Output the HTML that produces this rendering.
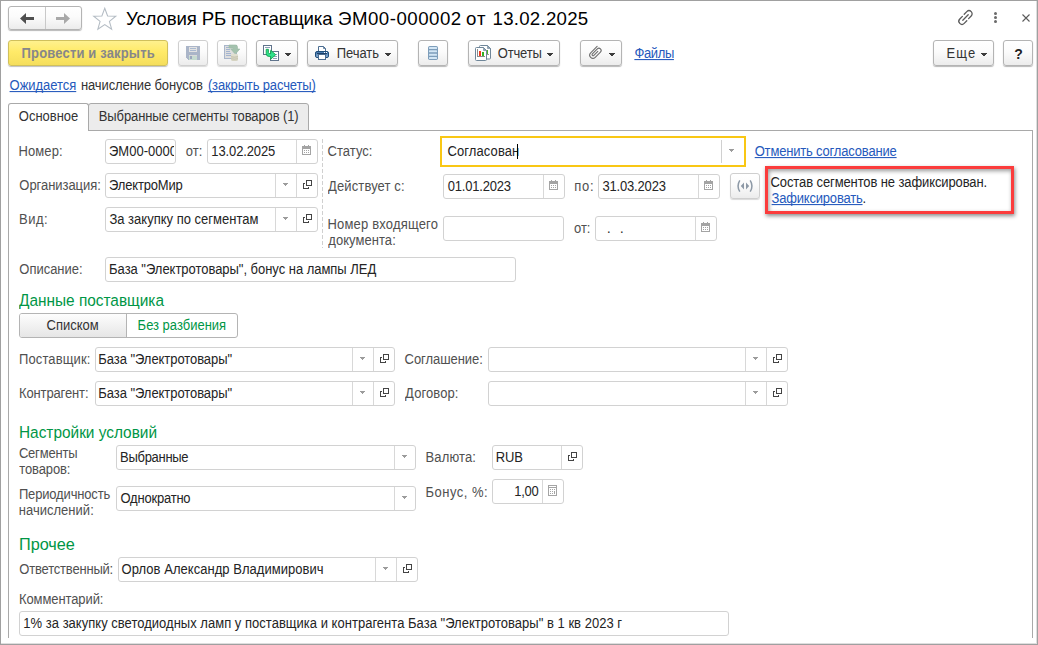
<!DOCTYPE html>
<html><head><meta charset="utf-8"><title>Условия РБ поставщика</title>
<style>
html,body{margin:0;padding:0;background:#fff;}
body{width:1038px;height:645px;position:relative;overflow:hidden;font-family:"Liberation Sans",Arial,sans-serif;font-size:13px;color:#333;}
.a{position:absolute;white-space:nowrap;}
.t{position:absolute;white-space:nowrap;line-height:16px;height:16px;transform:scaleY(1.07);transform-origin:0 12.5px;}
.btn{border:1px solid #b4b4b4;border-radius:3px;background:linear-gradient(#ffffff,#fbfbfb 45%,#ececec);box-shadow:0 1px 1px rgba(0,0,0,.28);box-sizing:border-box;}
.btn.dis{border-color:#cfcfcf;box-shadow:0 1px 1px rgba(0,0,0,.15);}
.lnk{color:#2559bc;text-decoration:underline;text-decoration-skip-ink:none;text-underline-offset:1px;text-decoration-thickness:1px;}
.fld{position:absolute;border:1px solid #d2d2d2;border-radius:3px;background:#fff;box-sizing:border-box;height:25px;}
.dv{position:absolute;top:0;width:1px;height:23px;background:#d8d8d8;}
.lbl{color:#505050;}
.val{color:#242424;}
.hdr{color:#009646;font-size:15.4px;line-height:20px;height:20px;}
svg{position:absolute;overflow:visible;}
</style></head><body>
<div class="a" style="left:0;top:0;width:1036px;height:643px;border:1px solid #a0a0a0;box-shadow:inset -1px -1px 0 #dedede;"></div>
<div class="a btn" style="left:8px;top:6px;width:74px;height:24px;"></div>
<div class="a" style="left:45px;top:7px;width:1px;height:22px;background:#c9c9c9;"></div>
<svg style="left:20px;top:13px" width="14" height="11"><path d="M0 5.5L6 0v4h8v3H6v4z" fill="#4f4f4f"/></svg>
<svg style="left:56px;top:13px" width="14" height="11"><path d="M14 5.5L8 0v4H0v3h8v4z" fill="#a9a9a9"/></svg>
<svg style="left:91.500px;top:6.500px" width="25.500" height="23.400" viewBox="0 0 24 22"><path d="M12 1.2l2.7 7.2 7.7.3-6 4.8 2.1 7.4L12 16.6 5.5 20.9l2.1-7.4-6-4.8 7.700-.3z" fill="#fff" stroke="#b4bcc4" stroke-width="1"/></svg>
<div class="a" style="left:126px;top:7px;font-size:18.67px;color:#000;line-height:24px;letter-spacing:-0.17px;">Условия РБ поставщика</div>
<div class="a" style="left:338px;top:7px;font-size:18.67px;color:#000;line-height:24px;letter-spacing:0.5px;">ЭМ00-000002</div>
<div class="a" style="left:466px;top:7px;font-size:18.67px;color:#000;line-height:24px;letter-spacing:1.0px;">от</div>
<div class="a" style="left:492.5px;top:7px;font-size:18.67px;color:#000;line-height:24px;letter-spacing:0.26px;">13.02.2025</div>
<svg style="left:957px;top:9px" width="17" height="17" viewBox="0 0 17 17"><g fill="none" stroke="#5a5a5a" stroke-width="1.3" stroke-linecap="round"><path d="M7.2 5.2l2.6-2.6a3.1 3.1 0 0 1 4.400 4.400l-2.6 2.600"/><path d="M9.800 11.800l-2.600 2.600a3.100 3.100 0 0 1-4.400-4.400l2.600-2.600"/><path d="M5.800 11.200l5.400-5.400"/></g></svg>
<div class="a" style="left:994px;top:12px;width:3px;height:3px;border-radius:50%;background:#6a6a6a;"></div>
<div class="a" style="left:994px;top:16px;width:3px;height:3px;border-radius:50%;background:#6a6a6a;"></div>
<div class="a" style="left:994px;top:20px;width:3px;height:3px;border-radius:50%;background:#6a6a6a;"></div>
<svg style="left:1022px;top:14px" width="8" height="8"><path d="M0.500 0.500l7 7M7.500 0.500l-7 7" stroke="#5a5a5a" stroke-width="1.1" fill="none"/></svg>
<div class="a" style="left:8px;top:40px;width:160px;height:26px;box-sizing:border-box;border:1px solid #d0c05c;border-radius:3px;background:linear-gradient(#fff18e,#ffea68 45%,#f5de5c);box-shadow:0 1px 1px rgba(0,0,0,.25);"></div>
<div class="t val" style="left:21.60px;top:46.4px;font-weight:bold;color:#87878a;letter-spacing:0.16px;">Провести и закрыть</div>
<div class="a btn dis" style="left:178px;top:40px;width:30px;height:26px;"></div>
<div class="a btn dis" style="left:217px;top:40px;width:30px;height:26px;"></div>
<div class="a btn" style="left:256px;top:40px;width:42px;height:26px;"></div>
<div class="a btn" style="left:307px;top:40px;width:91px;height:26px;"></div>
<div class="a btn" style="left:418px;top:40px;width:30px;height:26px;"></div>
<div class="a btn" style="left:468px;top:40px;width:92px;height:26px;"></div>
<div class="a btn" style="left:580px;top:40px;width:42px;height:26px;"></div>
<div class="a btn" style="left:933px;top:40px;width:61px;height:26px;"></div>
<div class="a btn" style="left:1003px;top:40px;width:30px;height:26px;"></div>
<svg style="left:186px;top:46px" width="14" height="14" shape-rendering="crispEdges"><path d="M0 0h14v14H2L0 12z" fill="#aab5c8"/><rect x="3" y="1" width="8" height="5" fill="#e2e2e2"/><rect x="4" y="2" width="6" height="1" fill="#a9b9d0"/><rect x="4" y="4" width="6" height="1" fill="#a9b9d0"/><rect x="3" y="9" width="8" height="5" fill="#c6dbd0"/><rect x="3" y="9" width="8" height="1" fill="#dadada"/><rect x="4" y="10" width="2" height="3" fill="#9aa6bd"/></svg>
<svg style="left:224px;top:45px" width="16" height="17"><g shape-rendering="crispEdges"><rect x="0.5" y="0.5" width="12" height="13" fill="#dedede" stroke="#a9b6cb"/><g fill="#a3b4d0"><rect x="2" y="2" width="3" height="1"/><rect x="2" y="4" width="4" height="1"/><rect x="2" y="6" width="4" height="1"/><rect x="2" y="8" width="5" height="1"/><rect x="2" y="10" width="5" height="1"/></g></g><path d="M5 0h6.500q2 0 2 2v2h2.300l-4.500 5.200L6.800 4h2.400V3H5z" fill="#a4c2ae" stroke="#98b8a3" stroke-width="0.600"/><g><rect x="7" y="9.500" width="7" height="6.500" rx="2" ry="1.500" fill="#d6d4c2"/><path d="M7 11.500q3.500 1.500 7 0M7 13.500q3.500 1.500 7 0" stroke="#c4c2ae" stroke-width="0.800" fill="none"/><ellipse cx="10.500" cy="10" rx="3.500" ry="1.200" fill="#e0dfd0"/></g></svg>
<svg style="left:263px;top:45px" width="16" height="16"><g shape-rendering="crispEdges"><rect x="0.5" y="0.5" width="8" height="9" fill="#fff" stroke="#60748c"/><rect x="2" y="2" width="5" height="1" fill="#8fa0b8"/><rect x="7.500" y="6.500" width="8" height="9" fill="#fff" stroke="#60748c"/><g fill="#8fa0b8"><rect x="11" y="9" width="3" height="1"/><rect x="11" y="11" width="3" height="1"/><rect x="10" y="13" width="4" height="1"/></g></g><path d="M3.200 4.300h2.200v3.200q0 1 1 1h1.300V5.300l5 4.400-5 4.600v-2.800H6.200q-3 0-3-3z" fill="#2ee08c" stroke="#12a64c" stroke-width="0.900" stroke-linejoin="round"/></svg>
<svg style="left:315px;top:46px" width="14" height="14"><path d="M3.500 5.500v-5h5l2 2v3z" fill="#fff" stroke="#4a6c90" stroke-width="1"/><path d="M8.500 0.500v2h2" fill="none" stroke="#4a6c90" stroke-width="0.800"/><defs><linearGradient id="pg" x1="0" y1="0" x2="0" y2="1"><stop offset="0" stop-color="#3a6ea5"/><stop offset="1" stop-color="#93b4d8"/></linearGradient></defs><rect x="0.500" y="5.500" width="13" height="6" rx="1.500" fill="url(#pg)" stroke="#1f4e7a"/><rect x="2" y="7" width="10" height="1" fill="#1c4068"/><rect x="9" y="6" width="1" height="1" fill="#fff"/><rect x="11" y="6" width="1" height="1" fill="#fff"/><rect x="3.500" y="8.500" width="7" height="5" fill="#fff" stroke="#4a6c90"/></svg>
<svg style="left:428px;top:46px" width="10" height="14"><rect x="0" y="0" width="10" height="14" rx="1.800" fill="#7d9dba"/><g fill="#d3e6f5"><rect x="1" y="1" width="8" height="2" rx="0.500"/><rect x="1" y="4.300" width="8" height="2" rx="0.500"/><rect x="1" y="7.700" width="8" height="2" rx="0.500"/><rect x="1" y="11" width="8" height="2" rx="0.500"/></g></svg>
<svg style="left:475px;top:45px" width="17" height="16"><path d="M5.500 0.500h7l3 3v9.500q0 1-1 1H5.500q-1 0-1-1V1.500q0-1 1-1z" fill="#fff" stroke="#6f8699"/><path d="M12.500 0.500v3h3z" fill="#8fa3b5" stroke="#6f8699" stroke-width="0.600"/><rect x="11" y="5" width="2" height="4" fill="#4db52e" shape-rendering="crispEdges"/><rect x="10" y="9" width="4" height="1" fill="#9a9a9a" shape-rendering="crispEdges"/><path d="M1.500 2.500h7l3 3v9q0 1-1 1H1.500q-1 0-1-1V3.500q0-1 1-1z" fill="#fff" stroke="#6f8699"/><path d="M8.500 2.500v3h3z" fill="#8fa3b5" stroke="#6f8699" stroke-width="0.600"/><g shape-rendering="crispEdges"><rect x="2" y="4" width="1" height="8" fill="#8a8a8a"/><rect x="2" y="11" width="8" height="1" fill="#8a8a8a"/><rect x="4" y="6" width="2" height="5" fill="#f03a1e"/><rect x="7" y="7" width="2" height="4" fill="#35b021"/></g></svg>
<svg style="left:585.8px;top:44.2px" width="18" height="18" viewBox="-9 -9 18 18"><g transform="rotate(45)"><path d="M-3.200 -6.200v9.100a3.200 3.200 0 0 0 6.400 0v-7.400a2.200 2.200 0 0 0 -4.400 0v7a1.050 1.050 0 0 0 2.100 0v-5.600" fill="none" stroke="#6e6e6e" stroke-width="1.100" stroke-linecap="round"/></g></svg>
<svg style="left:285px;top:53px" width="6" height="3" shape-rendering="crispEdges"><path d="M0 0h6v1h-1v1h-1v1h-2v-1h-1v-1h-1z" fill="#3c3c3c"/></svg>
<svg style="left:385px;top:53px" width="6" height="3" shape-rendering="crispEdges"><path d="M0 0h6v1h-1v1h-1v1h-2v-1h-1v-1h-1z" fill="#3c3c3c"/></svg>
<svg style="left:547px;top:53px" width="6" height="3" shape-rendering="crispEdges"><path d="M0 0h6v1h-1v1h-1v1h-2v-1h-1v-1h-1z" fill="#3c3c3c"/></svg>
<svg style="left:609px;top:53px" width="6" height="3" shape-rendering="crispEdges"><path d="M0 0h6v1h-1v1h-1v1h-2v-1h-1v-1h-1z" fill="#3c3c3c"/></svg>
<svg style="left:981px;top:53px" width="6" height="3" shape-rendering="crispEdges"><path d="M0 0h6v1h-1v1h-1v1h-2v-1h-1v-1h-1z" fill="#3c3c3c"/></svg>
<div class="t val" style="left:336.64px;top:46.4px;letter-spacing:-0.036px;color:#333;">Печать</div>
<div class="t val" style="left:497.76px;top:46.4px;letter-spacing:-0.185px;color:#333;">Отчеты</div>
<div class="t val" style="left:946.58px;top:46.4px;letter-spacing:1.113px;color:#333;">Еще</div>
<div class="t" style="left:1003.5px;top:46px;width:30px;text-align:center;font-weight:bold;font-size:14px;color:#222;">?</div>
<div class="t lnk" style="left:634.39px;top:46.4px;letter-spacing:-0.354px;">Файлы</div>
<div class="t lnk" style="left:9.57px;top:78.4px;letter-spacing:-0.041px;">Ожидается</div>
<div class="t val" style="left:80.94px;top:78.4px;letter-spacing:-0.108px;color:#333;">начисление бонусов</div>
<div class="t lnk" style="left:207.90px;top:78.4px;letter-spacing:-0.140px;">(закрыть расчеты)</div>
<div class="a" style="left:8px;top:130px;width:1025px;height:508px;border:1px solid #a9a9a9;border-bottom:none;box-sizing:border-box;"></div>
<div class="a" style="left:88px;top:103px;width:221px;height:28px;box-sizing:border-box;border:1px solid #a9a9a9;border-radius:3px 3px 0 0;background:#ececec;"></div>
<div class="a" style="left:8px;top:103px;width:81px;height:28px;box-sizing:border-box;border:1px solid #a9a9a9;border-bottom:none;border-radius:3px 3px 0 0;background:#fff;"></div>
<div class="t val" style="left:18.85px;top:109.0px;letter-spacing:-0.025px;color:#333;">Основное</div>
<div class="t val" style="left:98.80px;top:109.0px;letter-spacing:-0.110px;color:#333;">Выбранные сегменты товаров (1)</div>
<div class="t lbl" style="left:18.61px;top:144.1px;letter-spacing:0.058px;">Номер:</div>
<div class="fld" style="left:105px;top:139px;width:71px;"></div>
<div class="a" style="left:106px;top:140px;width:68px;height:23px;overflow:hidden;">
<div class="t val" style="left:3.00px;top:4.4px;">ЭМ00-000002</div>
</div>
<div class="t lbl" style="left:185.69px;top:144.1px;letter-spacing:0.065px;">от:</div>
<div class="fld" style="left:207px;top:139px;width:111px;"></div>
<div class="a" style="left:296px;top:140px;width:1px;height:23px;background:#d8d8d8;"></div>
<svg style="left:302px;top:145px" width="9" height="11" shape-rendering="crispEdges"><rect x="2" y="0" width="1" height="1" fill="#a4a4a4"/><rect x="6" y="0" width="1" height="1" fill="#a4a4a4"/><rect x="0" y="1" width="9" height="3" fill="#a4a4a4"/><rect x="0.5" y="1.5" width="8" height="8" fill="none" stroke="#a4a4a4"/><g fill="#a4a4a4"><rect x="2" y="5" width="1" height="1"/><rect x="4" y="5" width="1" height="1"/><rect x="6" y="5" width="1" height="1"/><rect x="2" y="7" width="1" height="1"/><rect x="4" y="7" width="1" height="1"/><rect x="6" y="7" width="1" height="1"/></g></svg>
<div class="t val" style="left:211.32px;top:144.4px;letter-spacing:-0.118px;">13.02.2025</div>
<div class="t lbl" style="left:19.36px;top:178.1px;letter-spacing:-0.053px;">Организация:</div>
<div class="fld" style="left:105px;top:173px;width:213px;"></div>
<div class="a" style="left:275px;top:174px;width:1px;height:23px;background:#d8d8d8;"></div>
<svg style="left:283px;top:183px" width="5" height="3" shape-rendering="crispEdges"><path d="M0 0h5v1h-1v1h-1v1h-1v-1h-1v-1h-1z" fill="#9c9c9c"/></svg>
<div class="a" style="left:296px;top:174px;width:1px;height:23px;background:#d8d8d8;"></div>
<svg style="left:303px;top:180px" width="9" height="9" shape-rendering="crispEdges"><rect x="3.5" y="0.5" width="5" height="5" fill="none" stroke="#444"/><path d="M2 3.5H0.5V8.500H5.500V7" fill="none" stroke="#444"/></svg>
<div class="t val" style="left:109.09px;top:178.4px;letter-spacing:-0.188px;">ЭлектроМир</div>
<div class="t lbl" style="left:18.98px;top:212.1px;letter-spacing:0.497px;">Вид:</div>
<div class="fld" style="left:105px;top:207px;width:213px;"></div>
<div class="a" style="left:275px;top:208px;width:1px;height:23px;background:#d8d8d8;"></div>
<svg style="left:283px;top:217px" width="5" height="3" shape-rendering="crispEdges"><path d="M0 0h5v1h-1v1h-1v1h-1v-1h-1v-1h-1z" fill="#9c9c9c"/></svg>
<div class="a" style="left:296px;top:208px;width:1px;height:23px;background:#d8d8d8;"></div>
<svg style="left:303px;top:214px" width="9" height="9" shape-rendering="crispEdges"><rect x="3.5" y="0.5" width="5" height="5" fill="none" stroke="#444"/><path d="M2 3.5H0.5V8.500H5.500V7" fill="none" stroke="#444"/></svg>
<div class="t val" style="left:109.39px;top:212.4px;letter-spacing:0.011px;">За закупку по сегментам</div>
<div class="a" style="left:322px;top:139px;width:1px;height:109px;background:repeating-linear-gradient(#d0d0d0 0,#d0d0d0 4px,transparent 4px,transparent 6px);"></div>
<div class="t lbl" style="left:327.61px;top:144.1px;letter-spacing:0.024px;">Статус:</div>
<div class="a" style="left:440px;top:136px;width:306px;height:31px;box-sizing:border-box;border:2px solid #f9c714;background:#fff;"></div>
<div class="a" style="left:721px;top:140px;width:1px;height:23px;background:#d0d0d0;"></div>
<svg style="left:729px;top:149px" width="5" height="3" shape-rendering="crispEdges"><path d="M0 0h5v1h-1v1h-1v1h-1v-1h-1v-1h-1z" fill="#9c9c9c"/></svg>
<div class="t val" style="left:447.48px;top:144.1px;letter-spacing:0.1px;">Согласован</div>
<div class="a" style="left:517px;top:144px;width:1px;height:15px;background:#000;"></div>
<div class="t lnk" style="left:754.69px;top:144.1px;letter-spacing:-0.180px;">Отменить согласование</div>
<div class="t lbl" style="left:328.11px;top:179.1px;letter-spacing:0.109px;">Действует с:</div>
<div class="fld" style="left:443px;top:174px;width:122px;"></div>
<div class="a" style="left:543px;top:175px;width:1px;height:23px;background:#d8d8d8;"></div>
<svg style="left:549px;top:180px" width="9" height="11" shape-rendering="crispEdges"><rect x="2" y="0" width="1" height="1" fill="#a4a4a4"/><rect x="6" y="0" width="1" height="1" fill="#a4a4a4"/><rect x="0" y="1" width="9" height="3" fill="#a4a4a4"/><rect x="0.5" y="1.5" width="8" height="8" fill="none" stroke="#a4a4a4"/><g fill="#a4a4a4"><rect x="2" y="5" width="1" height="1"/><rect x="4" y="5" width="1" height="1"/><rect x="6" y="5" width="1" height="1"/><rect x="2" y="7" width="1" height="1"/><rect x="4" y="7" width="1" height="1"/><rect x="6" y="7" width="1" height="1"/></g></svg>
<div class="t val" style="left:447.72px;top:179.4px;letter-spacing:-0.206px;">01.01.2023</div>
<div class="t lbl" style="left:574.33px;top:179.1px;letter-spacing:0.647px;">по:</div>
<div class="fld" style="left:598px;top:174px;width:122px;"></div>
<div class="a" style="left:698px;top:175px;width:1px;height:23px;background:#d8d8d8;"></div>
<svg style="left:704px;top:180px" width="9" height="11" shape-rendering="crispEdges"><rect x="2" y="0" width="1" height="1" fill="#a4a4a4"/><rect x="6" y="0" width="1" height="1" fill="#a4a4a4"/><rect x="0" y="1" width="9" height="3" fill="#a4a4a4"/><rect x="0.5" y="1.5" width="8" height="8" fill="none" stroke="#a4a4a4"/><g fill="#a4a4a4"><rect x="2" y="5" width="1" height="1"/><rect x="4" y="5" width="1" height="1"/><rect x="6" y="5" width="1" height="1"/><rect x="2" y="7" width="1" height="1"/><rect x="4" y="7" width="1" height="1"/><rect x="6" y="7" width="1" height="1"/></g></svg>
<div class="t val" style="left:602.50px;top:179.4px;letter-spacing:-0.182px;">31.03.2023</div>
<div class="a btn dis" style="left:730px;top:173px;width:30px;height:26px;"></div>
<svg style="left:736px;top:180px" width="18" height="12" viewBox="0 0 18 12"><g fill="none" stroke="#8d99a6" stroke-width="1.500"><path d="M3.800 0.300Q0.300 6 3.800 11.700"/><path d="M14.200 0.300Q17.700 6 14.200 11.700"/></g><path d="M8 2.600v6.800L4.800 6zM10 2.600v6.800L13.200 6z" fill="#8d99a6"/></svg>
<div class="t lbl" style="left:327.53px;top:217.1px;letter-spacing:0.180px;">Номер входящего</div>
<div class="t lbl" style="left:328.35px;top:233.4px;letter-spacing:0.044px;">документа:</div>
<div class="fld" style="left:443px;top:216px;width:121px;"></div>
<div class="t lbl" style="left:574.01px;top:221.1px;letter-spacing:-0.019px;">от:</div>
<div class="fld" style="left:595px;top:216px;width:122px;"></div>
<div class="a" style="left:695px;top:217px;width:1px;height:23px;background:#d8d8d8;"></div>
<svg style="left:701px;top:222px" width="9" height="11" shape-rendering="crispEdges"><rect x="2" y="0" width="1" height="1" fill="#a4a4a4"/><rect x="6" y="0" width="1" height="1" fill="#a4a4a4"/><rect x="0" y="1" width="9" height="3" fill="#a4a4a4"/><rect x="0.5" y="1.5" width="8" height="8" fill="none" stroke="#a4a4a4"/><g fill="#a4a4a4"><rect x="2" y="5" width="1" height="1"/><rect x="4" y="5" width="1" height="1"/><rect x="6" y="5" width="1" height="1"/><rect x="2" y="7" width="1" height="1"/><rect x="4" y="7" width="1" height="1"/><rect x="6" y="7" width="1" height="1"/></g></svg>
<div class="t val" style="left:607.00px;top:221.1px;">.</div>
<div class="t val" style="left:620.00px;top:221.1px;">.</div>
<div class="a" style="left:765px;top:166px;width:249px;height:48px;box-sizing:border-box;border:3px solid #fb3c3c;background:#fff;box-shadow:1px 2px 4px rgba(0,0,0,.45),inset 1px 2px 4px rgba(0,0,0,.4);"></div>
<div class="t val" style="left:770.58px;top:175.4px;letter-spacing:-0.108px;">Состав сегментов не зафиксирован.</div>
<div class="t val" style="left:771.62px;top:191.4px;letter-spacing:-0.200px;"><span class="lnk">Зафиксировать</span>.</div>
<div class="t lbl" style="left:19.36px;top:262.4px;letter-spacing:-0.033px;">Описание:</div>
<div class="fld" style="left:105px;top:257px;width:411px;"></div>
<div class="t val" style="left:109.09px;top:262.4px;letter-spacing:-0.029px;">База "Электротовары", бонус на лампы ЛЕД</div>
<div class="t hdr" style="left:19px;top:290.9px;transform:scale(1.0,1.06);transform-origin:0 15.5px;">Данные поставщика</div>
<div class="a" style="left:19px;top:313px;width:219px;height:25px;box-sizing:border-box;border:1px solid #b4b4b4;border-radius:3px;background:#fff;"></div>
<div class="a" style="left:20px;top:314px;width:106px;height:23px;background:linear-gradient(#fdfdfd,#e6e6e6);border-right:1px solid #b4b4b4;border-radius:2px 0 0 2px;"></div>
<div class="t val" style="left:46.53px;top:317.9px;letter-spacing:0.002px;color:#333;">Списком</div>
<div class="t val" style="left:137.61px;top:317.9px;letter-spacing:-0.009px;color:#009646;">Без разбиения</div>
<div class="t lbl" style="left:18.94px;top:352.1px;letter-spacing:0.126px;">Поставщик:</div>
<div class="fld" style="left:95px;top:347px;width:300px;"></div>
<div class="a" style="left:352px;top:348px;width:1px;height:23px;background:#d8d8d8;"></div>
<svg style="left:360px;top:357px" width="5" height="3" shape-rendering="crispEdges"><path d="M0 0h5v1h-1v1h-1v1h-1v-1h-1v-1h-1z" fill="#9c9c9c"/></svg>
<div class="a" style="left:373px;top:348px;width:1px;height:23px;background:#d8d8d8;"></div>
<svg style="left:380px;top:354px" width="9" height="9" shape-rendering="crispEdges"><rect x="3.5" y="0.5" width="5" height="5" fill="none" stroke="#444"/><path d="M2 3.5H0.5V8.500H5.500V7" fill="none" stroke="#444"/></svg>
<div class="t val" style="left:98.35px;top:352.4px;letter-spacing:-0.062px;">База "Электротовары"</div>
<div class="t lbl" style="left:404.61px;top:352.1px;letter-spacing:-0.070px;">Соглашение:</div>
<div class="fld" style="left:488px;top:347px;width:300px;"></div>
<div class="a" style="left:745px;top:348px;width:1px;height:23px;background:#d8d8d8;"></div>
<svg style="left:753px;top:357px" width="5" height="3" shape-rendering="crispEdges"><path d="M0 0h5v1h-1v1h-1v1h-1v-1h-1v-1h-1z" fill="#9c9c9c"/></svg>
<div class="a" style="left:766px;top:348px;width:1px;height:23px;background:#d8d8d8;"></div>
<svg style="left:773px;top:354px" width="9" height="9" shape-rendering="crispEdges"><rect x="3.5" y="0.5" width="5" height="5" fill="none" stroke="#444"/><path d="M2 3.5H0.5V8.500H5.500V7" fill="none" stroke="#444"/></svg>
<div class="t lbl" style="left:18.98px;top:386.1px;letter-spacing:-0.129px;">Контрагент:</div>
<div class="fld" style="left:95px;top:381px;width:300px;"></div>
<div class="a" style="left:352px;top:382px;width:1px;height:23px;background:#d8d8d8;"></div>
<svg style="left:360px;top:391px" width="5" height="3" shape-rendering="crispEdges"><path d="M0 0h5v1h-1v1h-1v1h-1v-1h-1v-1h-1z" fill="#9c9c9c"/></svg>
<div class="a" style="left:373px;top:382px;width:1px;height:23px;background:#d8d8d8;"></div>
<svg style="left:380px;top:388px" width="9" height="9" shape-rendering="crispEdges"><rect x="3.5" y="0.5" width="5" height="5" fill="none" stroke="#444"/><path d="M2 3.5H0.5V8.500H5.500V7" fill="none" stroke="#444"/></svg>
<div class="t val" style="left:98.35px;top:386.4px;letter-spacing:-0.062px;">База "Электротовары"</div>
<div class="t lbl" style="left:405.11px;top:386.1px;letter-spacing:0.092px;">Договор:</div>
<div class="fld" style="left:488px;top:381px;width:300px;"></div>
<div class="a" style="left:745px;top:382px;width:1px;height:23px;background:#d8d8d8;"></div>
<svg style="left:753px;top:391px" width="5" height="3" shape-rendering="crispEdges"><path d="M0 0h5v1h-1v1h-1v1h-1v-1h-1v-1h-1z" fill="#9c9c9c"/></svg>
<div class="a" style="left:766px;top:382px;width:1px;height:23px;background:#d8d8d8;"></div>
<svg style="left:773px;top:388px" width="9" height="9" shape-rendering="crispEdges"><rect x="3.5" y="0.5" width="5" height="5" fill="none" stroke="#444"/><path d="M2 3.5H0.5V8.500H5.500V7" fill="none" stroke="#444"/></svg>
<div class="t hdr" style="left:19px;top:422.9px;transform:scale(1.0,1.06);transform-origin:0 15.5px;">Настройки условий</div>
<div class="t lbl" style="left:18.92px;top:445.9px;letter-spacing:-0.203px;">Сегменты</div>
<div class="t lbl" style="left:19.35px;top:462.1px;letter-spacing:-0.145px;">товаров:</div>
<div class="fld" style="left:116px;top:445px;width:300px;"></div>
<div class="a" style="left:394px;top:446px;width:1px;height:23px;background:#d8d8d8;"></div>
<svg style="left:402px;top:455px" width="5" height="3" shape-rendering="crispEdges"><path d="M0 0h5v1h-1v1h-1v1h-1v-1h-1v-1h-1z" fill="#9c9c9c"/></svg>
<div class="t val" style="left:120.09px;top:450.4px;letter-spacing:-0.292px;">Выбранные</div>
<div class="t lbl" style="left:425.53px;top:450.1px;letter-spacing:0.133px;">Валюта:</div>
<div class="fld" style="left:492px;top:445px;width:91px;"></div>
<div class="a" style="left:561px;top:446px;width:1px;height:23px;background:#d8d8d8;"></div>
<svg style="left:568px;top:452px" width="9" height="9" shape-rendering="crispEdges"><rect x="3.5" y="0.5" width="5" height="5" fill="none" stroke="#444"/><path d="M2 3.5H0.5V8.500H5.500V7" fill="none" stroke="#444"/></svg>
<div class="t val" style="left:495.65px;top:450.4px;letter-spacing:-0.046px;">RUB</div>
<div class="t lbl" style="left:18.94px;top:486.6px;letter-spacing:-0.167px;">Периодичность</div>
<div class="t lbl" style="left:18.72px;top:502.9px;letter-spacing:0.024px;">начислений:</div>
<div class="fld" style="left:116px;top:486px;width:300px;"></div>
<div class="a" style="left:394px;top:487px;width:1px;height:23px;background:#d8d8d8;"></div>
<svg style="left:402px;top:496px" width="5" height="3" shape-rendering="crispEdges"><path d="M0 0h5v1h-1v1h-1v1h-1v-1h-1v-1h-1z" fill="#9c9c9c"/></svg>
<div class="t val" style="left:120.53px;top:491.4px;letter-spacing:-0.222px;">Однократно</div>
<div class="t lbl" style="left:425.53px;top:484.6px;letter-spacing:0.489px;">Бонус, %:</div>
<div class="fld" style="left:492px;top:479px;width:72px;"></div>
<div class="a" style="left:542px;top:480px;width:1px;height:23px;background:#d8d8d8;"></div>
<svg style="left:548px;top:485px" width="9" height="11" shape-rendering="crispEdges"><rect x="0.5" y="0.5" width="8" height="10" fill="none" stroke="#a4a4a4"/><rect x="1" y="2" width="7" height="1" fill="#a4a4a4"/><g fill="#a4a4a4"><rect x="2" y="4" width="1" height="1"/><rect x="4" y="4" width="1" height="1"/><rect x="6" y="4" width="1" height="1"/><rect x="2" y="6" width="1" height="1"/><rect x="4" y="6" width="1" height="1"/><rect x="6" y="6" width="1" height="3"/><rect x="2" y="8" width="1" height="1"/><rect x="4" y="8" width="1" height="1"/></g></svg>
<div class="t val" style="left:514.20px;top:484.4px;letter-spacing:-0.234px;">1,00</div>
<div class="t hdr" style="left:18.8px;top:534.6px;transform:scale(1.055,1.06);transform-origin:0 15.5px;">Прочее</div>
<div class="t lbl" style="left:19.36px;top:561.6px;letter-spacing:-0.201px;">Ответственный:</div>
<div class="fld" style="left:118px;top:557px;width:300px;"></div>
<div class="a" style="left:375px;top:558px;width:1px;height:23px;background:#d8d8d8;"></div>
<svg style="left:383px;top:567px" width="5" height="3" shape-rendering="crispEdges"><path d="M0 0h5v1h-1v1h-1v1h-1v-1h-1v-1h-1z" fill="#9c9c9c"/></svg>
<div class="a" style="left:396px;top:558px;width:1px;height:23px;background:#d8d8d8;"></div>
<svg style="left:403px;top:564px" width="9" height="9" shape-rendering="crispEdges"><rect x="3.5" y="0.5" width="5" height="5" fill="none" stroke="#444"/><path d="M2 3.5H0.5V8.500H5.500V7" fill="none" stroke="#444"/></svg>
<div class="t val" style="left:121.58px;top:562.4px;letter-spacing:0.040px;">Орлов Александр Владимирович</div>
<div class="t lbl" style="left:18.98px;top:591.6px;letter-spacing:-0.091px;">Комментарий:</div>
<div class="fld" style="left:19px;top:611px;width:710px;"></div>
<div class="t val" style="left:23.32px;top:616.4px;letter-spacing:0.019px;">1% за закупку светодиодных ламп у поставщика и контрагента База "Электротовары" в 1 кв 2023 г</div>
</body></html>
